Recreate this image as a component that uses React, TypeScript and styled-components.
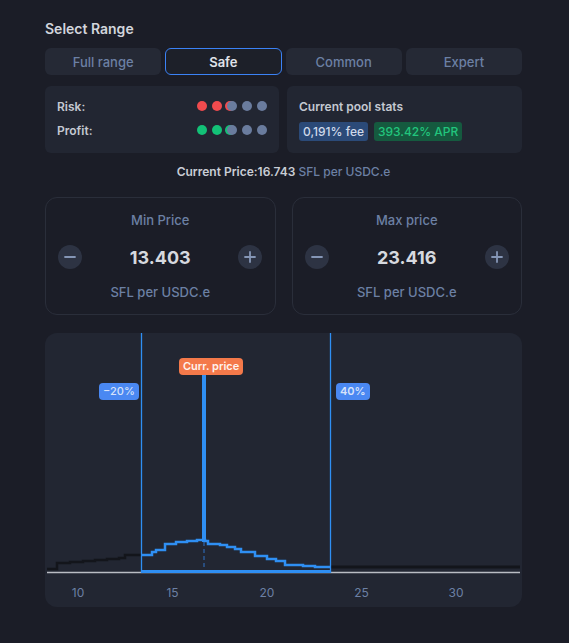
import React from 'react';
import styled, { createGlobalStyle } from 'styled-components';

const GlobalStyle = createGlobalStyle`
  html, body { margin: 0; padding: 0; background: #1b1d27; }
  body { font-family: Inter, "Noto Sans", "Liberation Sans", sans-serif; }
`;

const Page = styled.div`
  width: 477px;
  padding: 20px 47px 36px 45px;
  display: flex;
  flex-direction: column;
`;

const Title = styled.div`
  font-size: 14px;
  font-weight: 600;
  color: #d2d5dc;
  line-height: 18px;
  margin-bottom: 10px;
`;

const Tabs = styled.div`
  display: grid;
  grid-template-columns: repeat(4, 1fr);
  gap: 4px;
`;

const Tab = styled.div<{ $active?: boolean }>`
  height: 27px;
  box-sizing: border-box;
  display: flex;
  align-items: center;
  justify-content: center;
  border-radius: 6px;
  font-size: 13px;
  font-weight: ${({ $active }) => ($active ? 600 : 500)};
  color: ${({ $active }) => ($active ? '#e1e4ea' : '#6c80a4')};
  background: ${({ $active }) => ($active ? '#1d2029' : '#252935')};
  border: 1px solid ${({ $active }) => ($active ? '#3b82f6' : 'transparent')};
`;

const StatsRow = styled.div`
  display: grid;
  grid-template-columns: 234px 1fr;
  gap: 8px;
  margin-top: 11px;
`;

const Card = styled.div<{ $pt: number }>`
  background: #222632;
  border-radius: 6px;
  height: 67px;
  box-sizing: border-box;
  padding: ${({ $pt }) => $pt}px 12px 0;
`;

const RatingRow = styled.div`
  display: flex;
  align-items: center;
  justify-content: space-between;
  height: 24px;
  font-size: 12px;
  font-weight: 600;
  color: #c4c8d1;
`;

const Dots = styled.div`
  display: flex;
  gap: 5px;
`;

const Dot = styled.span<{ $color: string; $edge?: string }>`
  width: 10px;
  height: 10px;
  border-radius: 50%;
  background: ${({ $color }) => $color};
  box-shadow: ${({ $edge }) => ($edge ? `-2px 0 0 ${$edge}` : 'none')};
`;

const PoolTitle = styled.div`
  font-size: 12px;
  font-weight: 600;
  color: #c4c8d1;
  line-height: 16px;
  margin-bottom: 7px;
`;

const Badges = styled.div`
  display: flex;
  gap: 6px;
`;

const Badge = styled.span<{ $bg: string; $fg: string }>`
  font-size: 12px;
  font-weight: 500;
  line-height: 19px;
  padding: 0 4px;
  border-radius: 3px;
  background: ${({ $bg }) => $bg};
  color: ${({ $fg }) => $fg};
`;

const CurrentPrice = styled.div`
  text-align: center;
  font-size: 12px;
  font-weight: 600;
  color: #c9cdd5;
  line-height: 16px;
  margin-top: 11px;
  span { color: #6c80a4; font-weight: 500; }
`;

const PriceRow = styled.div`
  display: grid;
  grid-template-columns: 1fr 1fr;
  gap: 16px;
  margin-top: 17px;
`;

const PriceCard = styled.div`
  border: 1px solid #2a2e3a;
  border-radius: 12px;
  height: 118px;
  box-sizing: border-box;
  display: flex;
  flex-direction: column;
  align-items: center;
  padding-top: 14px;
`;

const PriceLabel = styled.div`
  font-size: 13px;
  font-weight: 500;
  color: #6c80a4;
  line-height: 16px;
`;

const PriceControls = styled.div`
  align-self: stretch;
  display: flex;
  align-items: center;
  justify-content: space-between;
  padding: 0 12px;
  margin-top: 17px;
`;

const PriceValue = styled.div`
  font-size: 18px;
  font-weight: 700;
  color: #d6d9df;
`;

const CircleBtn = styled.div`
  width: 24px;
  height: 24px;
  border-radius: 50%;
  background: #2d3343;
  display: flex;
  align-items: center;
  justify-content: center;
`;

const Unit = styled.div`
  font-size: 13px;
  font-weight: 500;
  color: #6c80a4;
  margin-top: 15px;
`;

const Chart = styled.div`
  margin-top: 18px;
  height: 274px;
  background: #222632;
  border-radius: 12px;
  position: relative;
  overflow: hidden;
`;

const Tag = styled.div<{ $bg: string; $fg: string }>`
  position: absolute;
  height: 17px;
  line-height: 17px;
  padding: 0 4px;
  border-radius: 4px;
  font-size: 11px;
  font-weight: 600;
  background: ${({ $bg }) => $bg};
  color: ${({ $fg }) => $fg};
`;

const Minus = () => (
  <svg width="14" height="14" viewBox="0 0 14 14">
    <path d="M2 7h10" stroke="#8596b6" strokeWidth="1.8" strokeLinecap="round" />
  </svg>
);

const Plus = () => (
  <svg width="14" height="14" viewBox="0 0 14 14">
    <path d="M2 7h10M7 2v10" stroke="#8596b6" strokeWidth="1.8" strokeLinecap="round" />
  </svg>
);

// chart helpers, local coords inside the chart box
const px = (v: number) => 33 + (v - 10) * 18.9;

const stepPath = (pts: [number, number][]) => {
  let d = `M${pts[0][0]},${pts[0][1]}`;
  for (let i = 1; i < pts.length; i++) {
    d += ` H${pts[i][0]} V${pts[i][1]}`;
  }
  return d;
};

const blackLeft: [number, number][] = [
  [2, 236], [12, 230], [25, 229], [38, 228], [50, 227], [62, 226], [74, 225], [80, 222], [96, 221],
];
const blueIn: [number, number][] = [
  [96, 222], [107, 219], [111, 217], [120, 211], [131, 209], [142, 208], [152, 207], [158, 207],
  [160, 208], [163, 211], [175, 212], [182, 214], [190, 216], [196, 219], [210, 223], [222, 226],
  [231, 228], [240, 232], [258, 233], [270, 234], [285, 234],
];

const PriceChart = () => (
  <Chart>
    <svg width="477" height="274" style={{ position: 'absolute', left: 0, top: 0 }}>
      <path d={stepPath(blackLeft)} fill="none" stroke="#13151b" strokeWidth="2.5" />
      <path d="M285,234 H475" stroke="#13151b" strokeWidth="3" />
      <line x1="2" y1="239.5" x2="475" y2="239.5" stroke="#b9bcc3" strokeWidth="1.5" />
      <path d={stepPath(blueIn)} fill="none" stroke="#2f8ff3" strokeWidth="2.5" />
      <line x1="159" y1="209" x2="159" y2="236" stroke="#2f72c8" strokeWidth="1" strokeDasharray="4 3" />
      <line x1="96" y1="238.5" x2="285" y2="238.5" stroke="#2f8ff3" strokeWidth="3" />
      <line x1="96.5" y1="0" x2="96.5" y2="240" stroke="#2f8ff3" strokeWidth="1.3" />
      <line x1="285.5" y1="0" x2="285.5" y2="240" stroke="#2f8ff3" strokeWidth="1.3" />
      <rect x="157" y="40" width="4" height="169" fill="#2f8ff3" />
      {[10, 15, 20, 25, 30].map((v) => (
        <text
          key={v}
          x={px(v)}
          y="264"
          textAnchor="middle"
          fontSize="12"
          fill="#6c80a4"
          fontFamily="Inter, 'Liberation Sans', sans-serif"
        >
          {v}
        </text>
      ))}
    </svg>
    <Tag $bg="#f4794a" $fg="#fff3ee" style={{ left: 134, top: 25 }}>Curr. price</Tag>
    <Tag $bg="#4a88f2" $fg="#d6e2fa" style={{ left: 54, top: 50, fontWeight: 500 }}>−20%</Tag>
    <Tag $bg="#4a88f2" $fg="#d6e2fa" style={{ left: 291, top: 50 }}>40%</Tag>
  </Chart>
);

const RED = '#f04b4e';
const GREEN = '#13c177';
const GRAY = '#6a7c9e';

const Rating = ({ label, color }: { label: string; color: string }) => (
  <RatingRow>
    <span>{label}</span>
    <Dots>
      <Dot $color={color} />
      <Dot $color={color} />
      <Dot $color={GRAY} $edge={color} />
      <Dot $color={GRAY} />
      <Dot $color={GRAY} />
    </Dots>
  </RatingRow>
);

const Price = ({ label, value }: { label: string; value: string }) => (
  <PriceCard>
    <PriceLabel>{label}</PriceLabel>
    <PriceControls>
      <CircleBtn><Minus /></CircleBtn>
      <PriceValue>{value}</PriceValue>
      <CircleBtn><Plus /></CircleBtn>
    </PriceControls>
    <Unit>SFL per USDC.e</Unit>
  </PriceCard>
);

export default function App() {
  return (
    <>
      <GlobalStyle />
      <Page>
        <Title>Select Range</Title>
        <Tabs>
          <Tab>Full range</Tab>
          <Tab $active>Safe</Tab>
          <Tab>Common</Tab>
          <Tab>Expert</Tab>
        </Tabs>
        <StatsRow>
          <Card $pt={8}>
            <Rating label="Risk:" color={RED} />
            <Rating label="Profit:" color={GREEN} />
          </Card>
          <Card $pt={13}>
            <PoolTitle>Current pool stats</PoolTitle>
            <Badges>
              <Badge $bg="#2b4a78" $fg="#cfd9ea">0,191% fee</Badge>
              <Badge $bg="#155a3f" $fg="#22c57d">393.42% APR</Badge>
            </Badges>
          </Card>
        </StatsRow>
        <CurrentPrice>
          Current Price:16.743 <span>SFL per USDC.e</span>
        </CurrentPrice>
        <PriceRow>
          <Price label="Min Price" value="13.403" />
          <Price label="Max price" value="23.416" />
        </PriceRow>
        <PriceChart />
      </Page>
    </>
  );
}
